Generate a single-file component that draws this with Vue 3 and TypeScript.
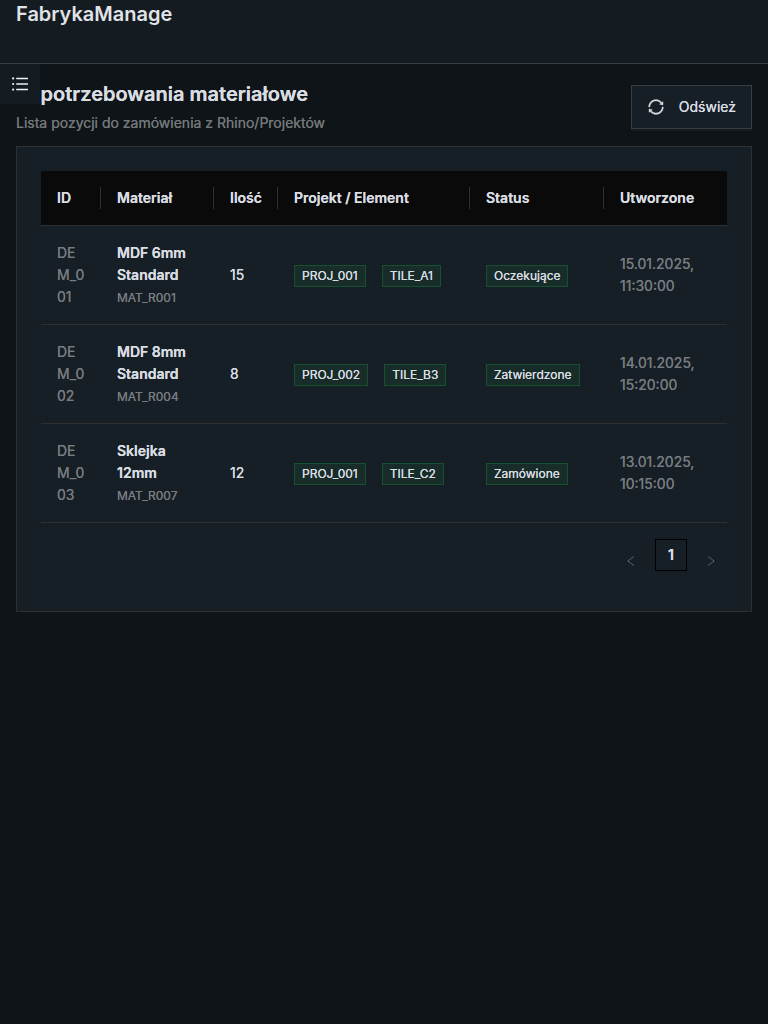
<script setup lang="ts">
import { ref } from 'vue'

interface Demand {
  id: string
  material: string
  code: string
  quantity: number
  project: string
  element: string
  status: string
  created: string
}

const columns = ['ID', 'Materiał', 'Ilość', 'Projekt / Element', 'Status', 'Utworzone']

const demands = ref<Demand[]>([
  { id: 'DEM_001', material: 'MDF 6mm Standard', code: 'MAT_R001', quantity: 15, project: 'PROJ_001', element: 'TILE_A1', status: 'Oczekujące', created: '15.01.2025, 11:30:00' },
  { id: 'DEM_002', material: 'MDF 8mm Standard', code: 'MAT_R004', quantity: 8, project: 'PROJ_002', element: 'TILE_B3', status: 'Zatwierdzone', created: '14.01.2025, 15:20:00' },
  { id: 'DEM_003', material: 'Sklejka 12mm', code: 'MAT_R007', quantity: 12, project: 'PROJ_001', element: 'TILE_C2', status: 'Zamówione', created: '13.01.2025, 10:15:00' },
])
</script>

<template>
  <div class="layout">
    <header class="topbar">
      <div class="brand">FabrykaManage</div>
    </header>
    <main class="content">
      <button class="menu-trigger" type="button" aria-label="Menu">
        <svg viewBox="0 0 1024 1024" width="20" height="20" fill="currentColor" aria-hidden="true">
          <path d="M912 192H328c-4.400 0-8 3.600-8 8v56c0 4.400 3.600 8 8 8h584c4.400 0 8-3.600 8-8v-56c0-4.400-3.600-8-8-8zm0 284H328c-4.400 0-8 3.600-8 8v56c0 4.400 3.600 8 8 8h584c4.400 0 8-3.600 8-8v-56c0-4.400-3.600-8-8-8zm0 284H328c-4.400 0-8 3.600-8 8v56c0 4.400 3.600 8 8 8h584c4.400 0 8-3.600 8-8v-56c0-4.400-3.600-8-8-8zM104 228a56 56 0 1 0 112 0 56 56 0 1 0-112 0zm0 284a56 56 0 1 0 112 0 56 56 0 1 0-112 0zm0 284a56 56 0 1 0 112 0 56 56 0 1 0-112 0z" />
        </svg>
      </button>
      <div class="page-head">
        <div>
          <h1 class="title">Zapotrzebowania materiałowe</h1>
          <p class="subtitle">Lista pozycji do zamówienia z Rhino/Projektów</p>
        </div>
        <button class="refresh" type="button">
          <svg viewBox="0 0 1024 1024" width="18" height="18" fill="currentColor" aria-hidden="true">
            <path d="M168 504.200c1-43.700 10-86.100 26.900-126 17.300-41 42.100-77.700 73.700-109.400S337 212.300 378 195c42.400-17.900 87.400-27 133.900-27s91.500 9.100 133.800 27A341.500 341.500 0 0 1 755 268.800c9.900 9.900 19.200 20.400 27.800 31.400l-60.200 47a8 8 0 0 0 3 14.100l175.700 43c5 1.200 9.900-2.600 9.900-7.700l.8-180.900c0-6.700-7.700-10.500-12.900-6.300l-56.400 44.100C765.800 155.100 646.200 92 511.800 92 282.700 92 96.300 275.600 92 503.800a8 8 0 0 0 8 8.200h60c4.400 0 7.900-3.500 8-7.800zM924 512h-60c-4.400 0-7.900 3.500-8 7.800-1 43.700-10 86.100-26.900 126-17.300 41-42.100 77.800-73.700 109.400A342.450 342.450 0 0 1 512.100 856a342.240 342.240 0 0 1-243.200-100.800c-9.900-9.900-19.200-20.400-27.800-31.400l60.200-47a8 8 0 0 0-3-14.100l-175.700-43c-5-1.200-9.900 2.600-9.900 7.700l-.7 181c0 6.700 7.700 10.500 12.900 6.300l56.400-44.100C258.200 868.900 377.800 932 512.200 932c229.200 0 415.500-183.700 419.800-411.800a8 8 0 0 0-8-8.200z" />
          </svg>
          <span>Odśwież</span>
        </button>
      </div>
      <section class="card">
        <table class="table">
          <colgroup>
            <col class="c-id" /><col class="c-material" /><col class="c-qty" />
            <col class="c-project" /><col class="c-status" /><col class="c-created" />
          </colgroup>
          <thead>
            <tr>
              <th v-for="column in columns" :key="column" scope="col"><div>{{ column }}</div></th>
            </tr>
          </thead>
          <tbody>
            <tr v-for="row in demands" :key="row.id">
              <td class="muted break">{{ row.id }}</td>
              <td>
                <div class="material">{{ row.material }}</div>
                <div class="code">{{ row.code }}</div>
              </td>
              <td>{{ row.quantity }}</td>
              <td>
                <div class="tags">
                  <span class="tag">{{ row.project }}</span>
                  <span class="tag">{{ row.element }}</span>
                </div>
              </td>
              <td><div class="tags"><span class="tag">{{ row.status }}</span></div></td>
              <td class="muted">{{ row.created }}</td>
            </tr>
          </tbody>
        </table>
        <nav class="pagination" aria-label="Strony">
          <button class="arrow" type="button" disabled aria-label="Poprzednia strona">
            <svg viewBox="0 0 12 12" width="12" height="12" fill="none" stroke="currentColor" aria-hidden="true"><path d="M9 1.500 2.800 6 9 10.500" /></svg>
          </button>
          <button class="page" type="button" aria-current="page">1</button>
          <button class="arrow" type="button" disabled aria-label="Następna strona">
            <svg viewBox="0 0 12 12" width="12" height="12" fill="none" stroke="currentColor" aria-hidden="true"><path d="M3 1.500 9.200 6 3 10.500" /></svg>
          </button>
        </nav>
      </section>
    </main>
  </div>
</template>

<style>
body {
  margin: 0;
  background: #0f1418;
}
</style>

<style scoped>
.layout {
  min-height: 100vh;
  background: #0f1418;
  color: #e0e4e8;
  font-family: Inter, "Liberation Sans", sans-serif;
  font-size: 14px;
  font-weight: 400;
  line-height: 22px;
}

.topbar {
  box-sizing: border-box;
  height: 64px;
  padding: 0 16px;
  background: #141b21;
  border-bottom: 1px solid #393e43;
}

.brand {
  font-size: 20px;
  font-weight: 600;
  line-height: 28px;
}

.content {
  position: relative;
  padding: 16px;
  color: #d9dde1;
  text-shadow: 0 0 0 currentColor;
}

button {
  font: inherit;
  color: inherit;
  text-shadow: inherit;
  cursor: pointer;
}

.menu-trigger {
  position: absolute;
  top: 0;
  left: 0;
  z-index: 1;
  display: flex;
  align-items: center;
  justify-content: center;
  width: 40px;
  height: 40px;
  padding: 0;
  border: 0;
  background: #141b21;
  color: #f0f2f3;
}

.refresh svg {
  stroke: currentColor;
  stroke-width: 20px;
}

.page-head {
  display: flex;
  align-items: center;
  justify-content: space-between;
  margin-bottom: 12px;
}

.title {
  margin: 0;
  font-size: 20px;
  font-weight: 600;
  line-height: 28px;
}

.subtitle {
  margin: 4px 0 0;
  color: #73777a;
}

.refresh {
  display: flex;
  align-items: center;
  gap: 14px;
  height: 44px;
  padding: 0 15px;
  border: 1px solid #393e43;
  background: #171f26;
  box-shadow: 0 2px 0 #141b21;
}

.card {
  padding: 24px 24px 40px;
  border: 1px solid #303030;
  background: #171f26;
}

.table {
  width: 100%;
  table-layout: fixed;
  border-collapse: separate;
  border-spacing: 0;
}

.c-id { width: 60px; }
.c-material { width: 113px; }
.c-qty { width: 64px; }
.c-project { width: 192px; }
.c-status { width: 134px; }

th {
  padding: 16px 0;
  border-bottom: 1px solid #303030;
  background: #0a0a0a;
  text-align: left;
  font-weight: 600;
}

th div {
  padding: 0 0 0 16px;
  border-right: 1px solid #303030;
}

th:last-child div {
  border-right: 0;
}

td {
  padding: 16px;
  border-bottom: 1px solid #303030;
}

.break {
  word-break: break-all;
}

.muted {
  color: #777c80;
}

.material {
  font-weight: 600;
}

.code {
  padding-top: 2px;
  color: #777c80;
  font-size: 12px;
  line-height: 20px;
}

.tags {
  display: flex;
  gap: 16px;
  padding-top: 2px;
}

.tag {
  padding: 0 7px;
  border: 1px solid #15502f;
  background: #182c29;
  font-size: 12px;
  line-height: 20px;
  white-space: nowrap;
}

.pagination {
  display: flex;
  justify-content: flex-end;
  gap: 8px;
  margin-top: 16px;
}

.arrow,
.page {
  box-sizing: border-box;
  width: 32px;
  height: 32px;
  padding: 0;
  border: 1px solid transparent;
  background: transparent;
}

.arrow {
  padding-top: 12px;
  color: #5b6065;
  line-height: 12px;
}

.page {
  border-color: #000;
  font-weight: 600;
}
</style>
